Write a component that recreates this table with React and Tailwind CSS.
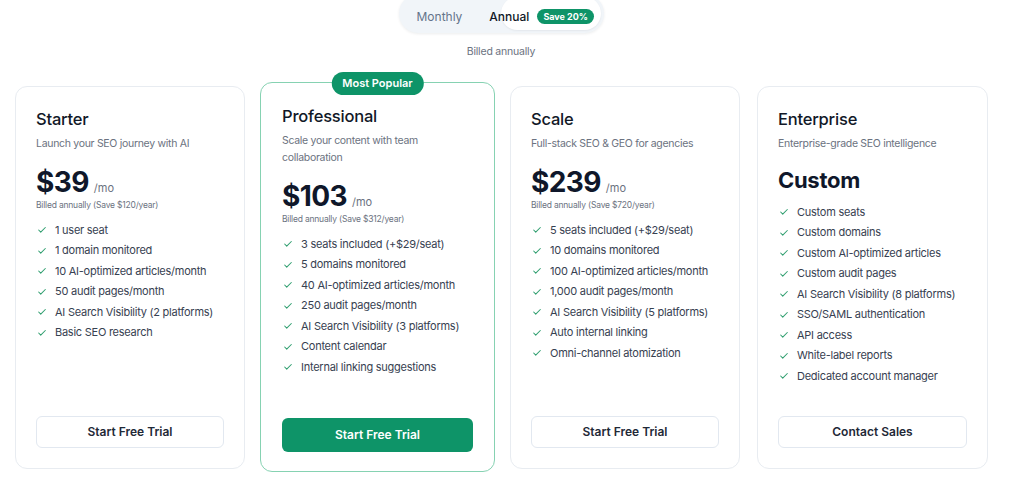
import React from "react";
import { Check } from "lucide-react";

const plans = [
  {
    name: "Starter",
    desc: "Launch your SEO journey with AI",
    price: "$39",
    billed: "Billed annually (Save $120/year)",
    features: [
      "1 user seat",
      "1 domain monitored",
      "10 AI-optimized articles/month",
      "50 audit pages/month",
      "AI Search Visibility (2 platforms)",
      "Basic SEO research",
    ],
    cta: "Start Free Trial",
    width: "w-[230px]",
  },
  {
    name: "Professional",
    desc: "Scale your content with team collaboration",
    price: "$103",
    billed: "Billed annually (Save $312/year)",
    features: [
      "3 seats included (+$29/seat)",
      "5 domains monitored",
      "40 AI-optimized articles/month",
      "250 audit pages/month",
      "AI Search Visibility (3 platforms)",
      "Content calendar",
      "Internal linking suggestions",
    ],
    cta: "Start Free Trial",
    popular: true,
    width: "w-[235px]",
  },
  {
    name: "Scale",
    desc: "Full-stack SEO & GEO for agencies",
    price: "$239",
    billed: "Billed annually (Save $720/year)",
    features: [
      "5 seats included (+$29/seat)",
      "10 domains monitored",
      "100 AI-optimized articles/month",
      "1,000 audit pages/month",
      "AI Search Visibility (5 platforms)",
      "Auto internal linking",
      "Omni-channel atomization",
    ],
    cta: "Start Free Trial",
    width: "w-[230px]",
  },
  {
    name: "Enterprise",
    desc: "Enterprise-grade SEO intelligence",
    custom: true,
    features: [
      "Custom seats",
      "Custom domains",
      "Custom AI-optimized articles",
      "Custom audit pages",
      "AI Search Visibility (8 platforms)",
      "SSO/SAML authentication",
      "API access",
      "White-label reports",
      "Dedicated account manager",
    ],
    cta: "Contact Sales",
    width: "w-[231px] ml-[2px]",
  },
];

function PlanCard({ plan }) {
  const popular = plan.popular;
  return (
    <div
      className={
        "relative flex flex-col rounded-xl bg-white " +
        plan.width +
        (popular
          ? " border border-[#86d2b2] px-[21px] pt-[21px] pb-[19px] -mt-[4px] -mb-[3px]"
          : " border border-[#e8ecf1] px-[20px] pt-[20px] pb-[20px]")
      }
    >
      {popular && (
        <div className="absolute -top-[11px] left-1/2 -translate-x-1/2 rounded-full bg-[#0e9468] px-[11px] h-[23px] flex items-center text-[11px] font-semibold text-white whitespace-nowrap">
          Most Popular
        </div>
      )}
      <h3 className="text-[16.5px] leading-[24px] font-medium text-[#111827] tracking-[-0.2px]">
        {plan.name}
      </h3>
      <p className="mt-[4px] text-[10.5px] leading-[17px] text-[#6b7280] tracking-[-0.3px]">
        {plan.desc}
      </p>
      {plan.custom ? (
        <div className="mt-[13px] text-[22px] leading-[30px] font-bold text-[#0f172a] tracking-[-0.3px]">
          Custom
        </div>
      ) : (
        <>
          <div className="mt-[13px] flex items-baseline gap-[5px]">
            <span className="text-[28px] leading-[34px] font-bold text-[#0f172a] tracking-[-0.6px]">
              {plan.price}
            </span>
            <span className="text-[11px] text-[#6b7280]">/mo</span>
          </div>
          <div className="text-[8.5px] leading-[12px] text-[#6b7280] tracking-[-0.2px]">
            {plan.billed}
          </div>
        </>
      )}
      <ul
        className={
          "flex flex-col gap-[5.5px] " + (plan.custom ? "mt-[10px]" : "mt-[12px]")
        }
      >
        {plan.features.map((f) => (
          <li
            key={f}
            className="flex items-center gap-[8px] text-[11px] leading-[15px] text-[#374151] tracking-[-0.25px]"
          >
            <Check size={10} strokeWidth={2.5} className="text-[#2f9e6f] shrink-0 ml-[1px]" />
            <span>{f}</span>
          </li>
        ))}
      </ul>
      <div className="mt-auto pt-6">
        {popular ? (
          <button className="w-full h-[34px] rounded-md bg-[#0e9468] text-[12px] font-semibold text-white">
            {plan.cta}
          </button>
        ) : (
          <button className="w-full h-[32px] rounded-md border border-[#e2e8f0] bg-white text-[12px] font-semibold text-[#1f2937]">
            {plan.cta}
          </button>
        )}
      </div>
    </div>
  );
}

export default function App() {
  return (
    <div
      className="w-[1024px] h-[483px] overflow-hidden bg-white"
      style={{ fontFamily: "Inter, 'Noto Sans', sans-serif" }}
    >
      <div className="flex justify-center">
        <div className="relative -mt-[6px] -ml-[22px] w-[205px] h-[39px] rounded-full bg-[#f1f5f9] shadow-[0_1px_3px_rgba(15,23,42,0.08)]">
          <div className="absolute right-[3px] top-[3px] w-[100px] h-[33px] rounded-full bg-white shadow-[0_1px_2px_rgba(15,23,42,0.06)]" />
          <div className="relative flex items-center h-full pt-[6px] pl-[18px]">
            <span className="text-[12px] text-[#64748b]">Monthly</span>
            <span className="ml-[27px] text-[12px] font-medium text-[#111827]">Annual</span>
            <span className="ml-[8px] rounded-full bg-[#0e9468] px-[6px] h-[15px] flex items-center text-[9px] font-bold text-white">
              Save 20%
            </span>
          </div>
        </div>
      </div>
      <p className="mt-[11px] pr-[22px] text-center text-[10.5px] text-[#6b7280] tracking-[-0.2px]">
        Billed annually
      </p>
      <div className="mt-[26px] ml-[15px] flex items-stretch gap-[15px] h-[383px]">
        {plans.map((p) => (
          <PlanCard key={p.name} plan={p} />
        ))}
      </div>
    </div>
  );
}
